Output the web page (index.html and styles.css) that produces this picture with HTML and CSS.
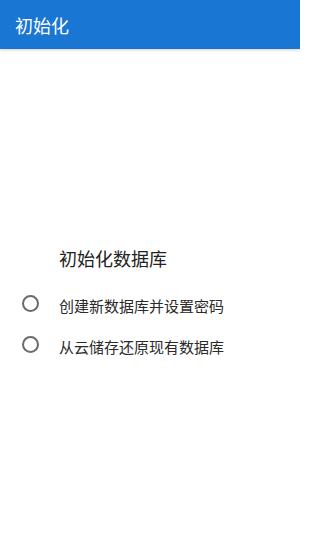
FILE: index.html
```html
<!DOCTYPE html>
<html lang="zh-CN">
<head>
<meta charset="utf-8">
<link rel="stylesheet" href="styles.css">
</head>
<body>
<header class="appbar"><span class="appbar-title">初始化</span></header>
<main class="content">
  <h1 class="heading">初始化数据库</h1>
  <div class="options">
    <label class="option"><span class="radio"></span><span class="option-text">创建新数据库并设置密码</span></label>
    <label class="option"><span class="radio"></span><span class="option-text">从云储存还原现有数据库</span></label>
  </div>
</main>
</body>
</html>
```

FILE: styles.css
```css
html, body {
  margin: 0;
  padding: 0;
  background: #ffffff;
}
body {
  width: 300px;
  height: 550px;
  font-family: "Noto Sans CJK SC", "Noto Sans", sans-serif;
  color: #222222;
}
.appbar {
  height: 49px;
  background: #1976d2;
  display: flex;
  align-items: center;
  padding-left: 15px;
  box-shadow: 0 1px 3px rgba(0, 0, 0, 0.18);
}
.appbar-title {
  color: #ffffff;
  font-size: 18px;
  line-height: 24px;
  padding-top: 1px;
}
.content {
  padding-top: 197px;
}
.heading {
  margin: 0 0 0 59px;
  font-size: 18px;
  font-weight: normal;
  line-height: 24px;
  color: #222222;
}
.options {
  display: flex;
  flex-direction: column;
  margin-top: 14px;
}
.option {
  height: 41px;
  display: flex;
  align-items: center;
  padding-left: 22px;
}
.radio {
  width: 17px;
  height: 17px;
  box-sizing: border-box;
  border: 2px solid #6b6b6b;
  border-radius: 50%;
  margin-right: 20px;
  margin-top: -2px;
  flex: none;
}
.option-text {
  font-size: 15px;
  line-height: 20px;
  color: #2a2a2a;
  padding-top: 2px;
}
```
